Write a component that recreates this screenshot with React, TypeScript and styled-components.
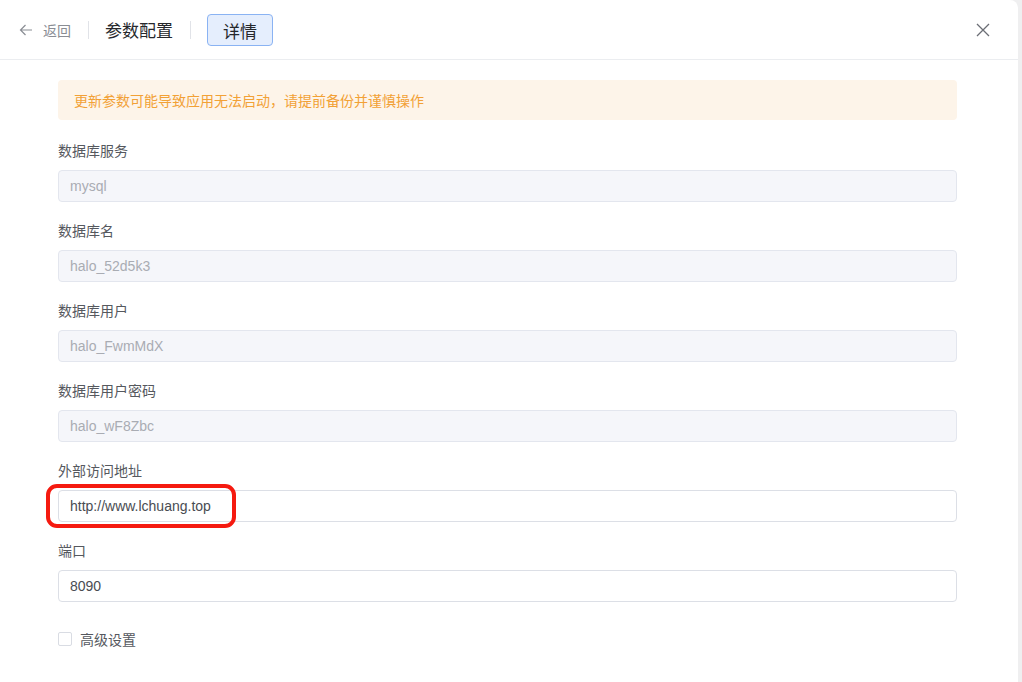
import styled, { createGlobalStyle } from 'styled-components';

const GlobalStyle = createGlobalStyle`
  html, body {
    margin: 0;
    padding: 0;
    background: #efeff0;
    font-family: "Liberation Sans", "Noto Sans CJK SC", sans-serif;
  }
  * {
    box-sizing: border-box;
  }
`;

interface FieldInfo {
  label: string;
  value: string;
  disabled: boolean;
  highlight?: boolean;
}

const fields: FieldInfo[] = [
  { label: '数据库服务', value: 'mysql', disabled: true },
  { label: '数据库名', value: 'halo_52d5k3', disabled: true },
  { label: '数据库用户', value: 'halo_FwmMdX', disabled: true },
  { label: '数据库用户密码', value: 'halo_wF8Zbc', disabled: true },
  { label: '外部访问地址', value: 'http://www.lchuang.top', disabled: false, highlight: true },
  { label: '端口', value: '8090', disabled: false },
];

function App() {
  const fieldList = fields.map((field) => (
    <Field key={field.label}>
      <Label>{field.label}</Label>
      <InputWrap>
        <Input $disabled={field.disabled}>{field.value}</Input>
        {field.highlight && <Highlight />}
      </InputWrap>
    </Field>
  ));

  return (
    <>
      <GlobalStyle />
      <Panel>
        <Header>
          <Breadcrumb>
            <BackLink>
              <svg width="14" height="14" viewBox="0 0 14 14" fill="none">
                <path
                  d="M13 7H1.5M6.5 2L1.5 7l5 5"
                  stroke="#8a8d94"
                  strokeWidth="1.2"
                />
              </svg>
              返回
            </BackLink>
            <Divider />
            <Title>参数配置</Title>
            <Divider />
            <Tag>详情</Tag>
          </Breadcrumb>
          <CloseButton>
            <svg width="14" height="14" viewBox="0 0 14 14" fill="none">
              <path d="M1 1l12 12M13 1L1 13" stroke="#6b6e75" strokeWidth="1.3" />
            </svg>
          </CloseButton>
        </Header>
        <Body>
          <Alert>更新参数可能导致应用无法启动，请提前备份并谨慎操作</Alert>
          {fieldList}
          <CheckRow>
            <Checkbox />
            高级设置
          </CheckRow>
        </Body>
      </Panel>
    </>
  );
}

const Panel = styled.div`
  width: 1018px;
  height: 682px;
  background: #ffffff;
  border-top-right-radius: 8px;
  overflow: hidden;
`;

const Header = styled.div`
  height: 60px;
  display: flex;
  align-items: center;
  justify-content: space-between;
  padding: 0 28px 0 19px;
  border-bottom: 1px solid #ebedf0;
`;

const Breadcrumb = styled.div`
  display: flex;
  align-items: center;
`;

const BackLink = styled.div`
  display: flex;
  align-items: center;
  gap: 10px;
  font-size: 14px;
  color: #8a8d94;
  cursor: pointer;
`;

const Divider = styled.span`
  width: 1px;
  height: 18px;
  background: #e1e3e8;
  margin: 0 16px 0 17px;
`;

const Title = styled.span`
  font-size: 17px;
  color: #26282c;
`;

const Tag = styled.span`
  display: inline-flex;
  align-items: center;
  justify-content: center;
  width: 66px;
  height: 32px;
  padding-top: 1px;
  font-size: 17px;
  color: #26282c;
  background: #e5eefd;
  border: 1px solid #8ab3f3;
  border-radius: 4px;
`;

const CloseButton = styled.div`
  display: flex;
  align-items: center;
  cursor: pointer;
`;

const Body = styled.div`
  width: 899px;
  margin-left: 58px;
  padding-top: 20px;
`;

const Alert = styled.div`
  height: 40px;
  display: flex;
  align-items: center;
  padding-left: 16px;
  background: #fdf4e9;
  border-radius: 4px;
  font-size: 14px;
  color: #f2a136;
  margin-bottom: 20px;
`;

const Field = styled.div`
  display: flex;
  flex-direction: column;
  margin-bottom: 18px;
`;

const Label = styled.div`
  height: 22px;
  line-height: 22px;
  font-size: 14px;
  color: #55585e;
  margin-bottom: 8px;
`;

const InputWrap = styled.div`
  position: relative;
`;

const Input = styled.div<{ $disabled: boolean }>`
  height: 32px;
  display: flex;
  align-items: center;
  padding-left: 11px;
  font-size: 14px;
  border-radius: 4px;
  border: 1px solid ${(p) => (p.$disabled ? '#e3e6ee' : '#dcdfe6')};
  background: ${(p) => (p.$disabled ? '#f5f6fa' : '#ffffff')};
  color: ${(p) => (p.$disabled ? '#a9acb3' : '#494c52')};
`;

const Highlight = styled.div`
  position: absolute;
  left: -12px;
  top: -6px;
  width: 190px;
  height: 44px;
  border: 4px solid #f51a10;
  border-radius: 11px;
  pointer-events: none;
`;

const CheckRow = styled.label`
  display: flex;
  align-items: center;
  gap: 8px;
  margin-top: 27px;
  font-size: 14px;
  color: #55585e;
`;

const Checkbox = styled.span`
  width: 14px;
  height: 14px;
  border: 1px solid #d9dce3;
  border-radius: 2px;
  background: #ffffff;
`;

export default App;
